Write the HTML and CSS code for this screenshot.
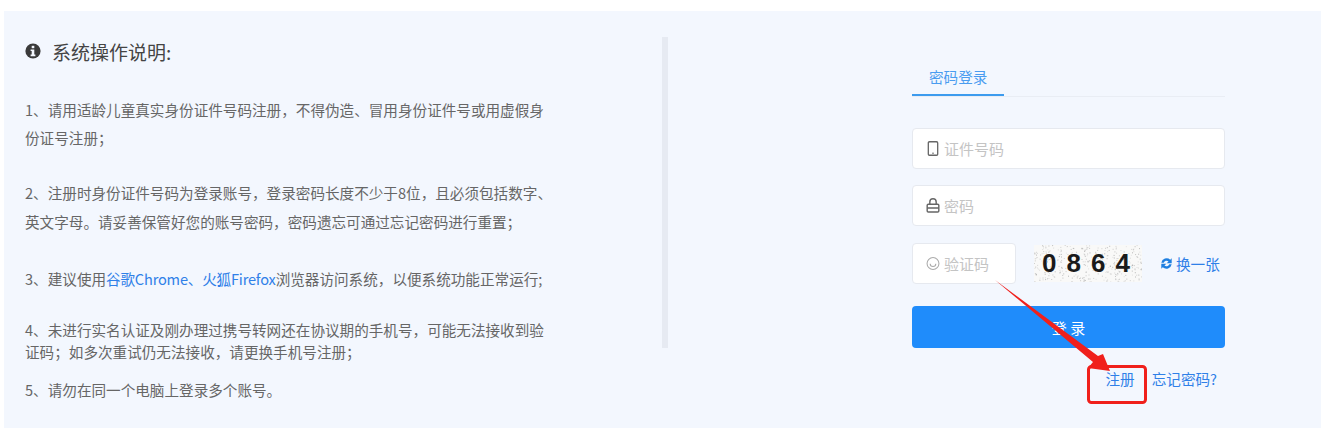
FILE: index.html
```html
<!DOCTYPE html>
<html lang="zh-CN">
<head>
  <meta charset="UTF-8" />
  <title>系统登录</title>
  <link rel="stylesheet" href="styles.css">
</head>
<body>

<main class="panel">
  <!-- 操作说明 -->
  <section class="notes">
    <h2 class="notes-title">
      <svg class="info-icon" viewBox="0 0 16 16"><circle cx="8" cy="8" r="7.6" fill="#3a3a3a"/><rect x="6.7" y="2.8" width="2.6" height="2.4" fill="#f3f7fe"/><path d="M5.6 6.4h3.7v5.2h1.1v1.6H5.6v-1.6h1.1V8H5.6z" fill="#f3f7fe"/></svg>
      系统操作说明:
    </h2>
    <p class="note note-1">1、请用适龄儿童真实身份证件号码注册，不得伪造、冒用身份证件号或用虚假身份证号注册；</p>
    <p class="note note-2">2、注册时身份证件号码为登录账号，登录密码长度不少于8位，且必须包括数字、英文字母。请妥善保管好您的账号密码，密码遗忘可通过忘记密码进行重置；</p>
    <p class="note note-3">3、建议使用<a class="browser-link" href="#">谷歌Chrome、火狐Firefox</a>浏览器访问系统，以便系统功能正常运行;</p>
    <p class="note note-4">4、未进行实名认证及刚办理过携号转网还在协议期的手机号，可能无法接收到验证码；如多次重试仍无法接收，请更换手机号注册；</p>
    <p class="note note-5">5、请勿在同一个电脑上登录多个账号。</p>
  </section>

  <div class="divider"></div>

  <!-- 登录表单 -->
  <section class="login">
    <div class="tabs"><a class="tab" href="#">密码登录</a></div>

    <div class="field">
      <svg class="field-icon" viewBox="0 0 14 16"><rect x="2" y="0.8" width="10" height="14.4" rx="1.2" fill="none" stroke="#666" stroke-width="1.4"/><path d="M6 13h2" stroke="#666"/></svg>
      <span class="placeholder">证件号码</span>
    </div>
    <div class="field">
      <svg class="field-icon" viewBox="0 0 14 16"><rect x="0.8" y="6.6" width="12.4" height="8.4" rx="1.2" fill="none" stroke="#666" stroke-width="1.5"/><path d="M3.6 6.6V4.2a3.4 3.4 0 0 1 6.8 0V6.6M0.8 10.6h12.4" fill="none" stroke="#666" stroke-width="1.5"/></svg>
      <span class="placeholder">密码</span>
    </div>

    <div class="captcha-row">
      <div class="field field-captcha">
        <svg class="field-icon" viewBox="0 0 16 16"><circle cx="8" cy="8" r="6.8" fill="none" stroke="#aaa" stroke-width="1.2"/><path d="M4.8 8.2a3.2 3.2 0 0 0 6.4 0" fill="none" stroke="#aaa" stroke-width="1.2"/></svg>
        <span class="placeholder">验证码</span>
      </div>
      <div class="captcha-img">
        <svg class="captcha-noise" viewBox="0 0 108 37" id="noise"></svg>
        <span class="captcha-code">0864</span>
      </div>
      <a class="refresh" href="#">
        <svg viewBox="0 0 16 16"><path d="M1.6 7a6.6 6.6 0 0 1 11-3.6L14.400 1.600v6.200H8.200l2.300-2.300A3.700 3.700 0 0 0 4.600 7zM14.400 9a6.600 6.600 0 0 1-11 3.600L1.600 14.400V8.200h6.200l-2.300 2.300A3.700 3.700 0 0 0 11.400 9z" fill="#1e7fe0"/></svg>
        换一张
      </a>
    </div>

    <button class="submit" type="button">登 录</button>

    <div class="links">
      <a href="#">注册</a>
      <a href="#">忘记密码?</a>
    </div>
  </section>

  <!-- 截图上的红色标注 -->
  <svg class="annotation" viewBox="0 0 1327 428">
    <path d="M995 280 L1098 356 L1103 354 L1110 371 L1088 368 L1093 362 Z" fill="#f0201c"/>
    <rect x="1088.500" y="366.500" width="57" height="36" rx="3" fill="none" stroke="#f0201c" stroke-width="3"/>
  </svg>
</main>

<script>
  // 验证码噪点
  var noise = document.getElementById('noise');
  var seed = 7;
  function rand(max) {
    seed = (seed * 9301 + 49297) % 233280;
    return seed / 233280 * max;
  }
  var dots = '';
  for (var i = 0; i < 360; i++) {
    dots += '<rect x="' + rand(108).toFixed(1) + '" y="' + rand(37).toFixed(1) + '" width="1" height="1" fill="#999" opacity="' + (0.2 + rand(0.5)).toFixed(2) + '"/>';
  }
  noise.innerHTML = dots;
</script>

</body>
</html>
```

FILE: styles.css
```css
body {
  margin: 0;
  background: #fff;
  font-family: "Noto Sans CJK SC", "Liberation Sans", sans-serif;
  color: #666;
  overflow: hidden;
}
a {
  text-decoration: none;
  color: #2f80e8;
}
.panel {
  position: relative;
  display: flex;
  width: 1317px;
  height: 417px;
  margin: 11px 0 0 4px;
  background: #f3f7fe;
  box-sizing: border-box;
}

/* 左侧说明 */
.notes {
  width: 529px;
  margin-left: 21px;
  padding-top: 28px;
  flex-shrink: 0;
}
.notes-title {
  display: flex;
  align-items: center;
  gap: 11px;
  margin: 0;
  font-size: 19px;
  font-weight: normal;
  line-height: 26px;
  color: #444;
}
.info-icon {
  width: 16px;
  height: 16px;
  margin-top: -2px;
}
.note {
  margin: 0;
  font-size: 14.6px;
  line-height: 28px;
}
.note-1 { margin-top: 31px; }
.note-2 { margin-top: 26px; line-height: 29px; }
.note-3 { margin-top: 30px; line-height: 25px; }
.note-4 { margin-top: 28px; line-height: 22px; }
.note-5 { margin-top: 14px; line-height: 25px; }
.browser-link {
  letter-spacing: -0.2px;
}

.divider {
  width: 6px;
  height: 311px;
  margin: 26px 0 0 108px;
  background: #e6eaf2;
  flex-shrink: 0;
}

/* 右侧登录 */
.login {
  width: 313px;
  margin-left: 244px;
  padding-top: 53px;
  flex-shrink: 0;
}
.tabs {
  height: 32px;
  border-bottom: 1px solid #e9edf4;
}
.tab {
  display: block;
  width: 92px;
  height: 32px;
  box-sizing: border-box;
  border-bottom: 2px solid #3d9bee;
  padding-left: 17px;
  font-size: 14.6px;
  line-height: 26px;
  color: #4a9cf0;
}
.field {
  display: flex;
  align-items: center;
  gap: 4px;
  height: 41px;
  margin-top: 16px;
  padding-left: 13px;
  box-sizing: border-box;
  background: #fff;
  border: 1px solid #e6e9ef;
  border-radius: 4px;
}
.tabs + .field {
  margin-top: 31px;
}
.field-icon {
  width: 14px;
  height: 15px;
  flex-shrink: 0;
}
.placeholder {
  font-size: 15px;
  color: #c4c4c4;
}
.captcha-row {
  display: flex;
  align-items: center;
  margin-top: 17px;
}
.field-captcha {
  width: 104px;
  margin-top: 0;
}
.captcha-img {
  position: relative;
  width: 108px;
  height: 37px;
  margin-left: 18px;
  background: #f9f9f8;
}
.captcha-noise {
  position: absolute;
  left: 0;
  top: 0;
  width: 108px;
  height: 37px;
}
.captcha-code {
  position: relative;
  padding-left: 8px;
  font-family: "Liberation Sans", sans-serif;
  font-size: 26px;
  font-weight: bold;
  letter-spacing: 10px;
  line-height: 37px;
  color: #1a1a1a;
}
.refresh {
  display: flex;
  align-items: center;
  gap: 3px;
  margin-left: 18px;
  font-size: 14.6px;
  color: #2f80e8;
}
.refresh svg {
  width: 13px;
  height: 13px;
}
.submit {
  display: block;
  width: 100%;
  height: 42px;
  margin-top: 22px;
  border: none;
  border-radius: 4px;
  background: #1f8cfb;
  color: #fff;
  font-family: inherit;
  font-size: 15px;
  cursor: pointer;
}
.links {
  display: flex;
  justify-content: flex-end;
  gap: 17px;
  margin-top: 20px;
  padding-right: 8px;
  font-size: 14.6px;
  line-height: 22px;
}

.annotation {
  position: absolute;
  left: -4px;
  top: -11px;
  width: 1327px;
  height: 428px;
  pointer-events: none;
}
```
